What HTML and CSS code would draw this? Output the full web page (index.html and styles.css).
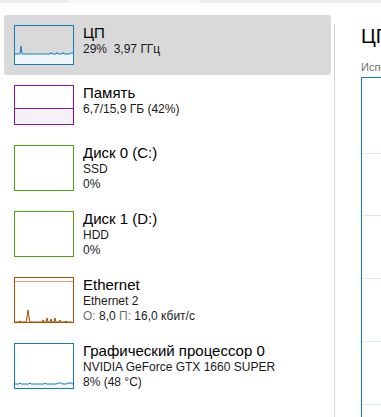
FILE: index.html
```html
<!DOCTYPE html>
<html lang="ru">
<head>
    <meta charset="UTF-8">
    <meta name="viewport" content="width=device-width, initial-scale=1.0">
    <title>Диспетчер задач — Производительность</title>
    <link rel="stylesheet" href="styles.css">
</head>
<body>
    <div class="tabs">
        <span class="tab"></span>
        <span class="tab tab-active"></span>
        <span class="tab"></span>
        <span class="tab"></span>
    </div>

    <div class="main">
        <div class="sidebar">
            <div class="item selected">
                <svg class="thumb" width="60" height="40" viewBox="0 0 60 40">
                    <path d="M1 29 L6 29 L7 21 L8 29 L36 29 L37 27.5 L38 29 L42 29 L43 27.5 L44 29 L48 29 L49 27.5 L50 29 L56 29 L57 28 L59 28 L59 39 L1 39 Z" fill="#f1f6fa"/>
                    <path d="M1 29 L6 29 L7 21 L8 29 L36 29 L37 27.5 L38 29 L42 29 L43 27.5 L44 29 L48 29 L49 27.5 L50 29 L56 29 L57 28 L59 28" fill="none" stroke="#117dbb" stroke-width="1"/>
                    <rect x="0.5" y="0.5" width="59" height="39" fill="none" stroke="#117dbb"/>
                </svg>
                <div class="info">
                    <div class="name">ЦП</div>
                    <div class="sub">29%&nbsp; 3,97 ГГц</div>
                </div>
            </div>

            <div class="item">
                <svg class="thumb" width="60" height="40" viewBox="0 0 60 40">
                    <rect x="1" y="23" width="58" height="16" fill="#f4f2f4"/>
                    <line x1="1" y1="23.5" x2="59" y2="23.5" stroke="#8b12ae"/>
                    <rect x="0.5" y="0.5" width="59" height="39" fill="none" stroke="#8b12ae"/>
                </svg>
                <div class="info">
                    <div class="name">Память</div>
                    <div class="sub">6,7/15,9 ГБ (42%)</div>
                </div>
            </div>

            <div class="item">
                <svg class="thumb thumb-tall" width="60" height="46" viewBox="0 0 60 46">
                    <rect x="0.5" y="0.5" width="59" height="45" fill="none" stroke="#4da60c"/>
                </svg>
                <div class="info">
                    <div class="name">Диск 0 (C:)</div>
                    <div class="sub">SSD</div>
                    <div class="sub">0%</div>
                </div>
            </div>

            <div class="item">
                <svg class="thumb thumb-tall" width="60" height="46" viewBox="0 0 60 46">
                    <rect x="0.5" y="0.5" width="59" height="45" fill="none" stroke="#4da60c"/>
                </svg>
                <div class="info">
                    <div class="name">Диск 1 (D:)</div>
                    <div class="sub">HDD</div>
                    <div class="sub">0%</div>
                </div>
            </div>

            <div class="item">
                <svg class="thumb thumb-tall" width="60" height="46" viewBox="0 0 60 46">
                    <line x1="1" y1="4.5" x2="59" y2="4.5" stroke="#d9a475"/>
                    <path d="M1 45 L5 45 L6 44 L7 45 L12 45 L13 40 L14 33 L15 40 L16 45 L28 45 L29 43 L30 45 L32 45 L33 41 L34 45 L36 45 L37 42 L38 45 L40 45 L41 41 L42 45 L45 45 L46 43 L47 45 L51 45 L52 44 L53 45 L58 45" fill="#f6e3d2" stroke="#a74f01" stroke-width="1"/>
                    <rect x="0.5" y="0.5" width="59" height="45" fill="none" stroke="#a74f01"/>
                </svg>
                <div class="info">
                    <div class="name">Ethernet</div>
                    <div class="sub">Ethernet 2</div>
                    <div class="sub"><span class="dim">О:</span> 8,0 <span class="dim">П:</span> 16,0 кбит/с</div>
                </div>
            </div>

            <div class="item">
                <svg class="thumb thumb-tall" width="60" height="46" viewBox="0 0 60 46">
                    <path d="M1 41 L5 41 L6 40 L7 41 L15 41 L16 40 L17 41 L30 41 L31 40 L32 41 L42 41 L44 40 L47 40 L49 41 L52 41 L54 40 L57 40 L59 41 L59 45 L1 45 Z" fill="#f1f6fa"/>
                    <path d="M1 41 L5 41 L6 40 L7 41 L15 41 L16 40 L17 41 L30 41 L31 40 L32 41 L42 41 L44 40 L47 40 L49 41 L52 41 L54 40 L57 40 L59 41" fill="none" stroke="#117dbb"/>
                    <rect x="0.5" y="0.5" width="59" height="45" fill="none" stroke="#117dbb"/>
                </svg>
                <div class="info">
                    <div class="name">Графический процессор 0</div>
                    <div class="sub">NVIDIA GeForce GTX 1660 SUPER</div>
                    <div class="sub">8% (48 °C)</div>
                </div>
            </div>
        </div>

        <div class="details">
            <div class="title">ЦП</div>
            <div class="caption">Использование</div>
            <div class="chart"></div>
        </div>
    </div>
</body>
</html>
```

FILE: styles.css
```css
html, body {
    margin: 0;
    padding: 0;
    background: white;
    overflow: hidden;
}
body {
    font-family: "Liberation Sans", Arial, sans-serif;
    color: black;
    width: 381px;
    height: 417px;
}
.tabs {
    display: flex;
    height: 3px;
    background: #ececec;
}
.tab {
    width: 67px;
    border-right: 1px solid #e2e2e2;
}
.tab-active {
    width: 132px;
    background: #f8f8f8;
}
.tab:last-child {
    flex: 1;
    border-right: none;
}
.main {
    display: flex;
    height: 414px;
}
.sidebar {
    width: 327px;
    padding: 12px 3px 0 4px;
    flex-shrink: 0;
}
.item {
    display: flex;
    align-items: flex-start;
    gap: 9px;
    padding: 10px 10px;
    border-radius: 3px;
}
.item.selected {
    background: #d9d9d9;
}
.thumb {
    display: block;
    flex-shrink: 0;
    width: 60px;
    height: 40px;
}
.thumb-tall {
    height: 46px;
}
.info {
    margin: -1px 0 -1px;
    white-space: nowrap;
}
.name {
    font-size: 15px;
    line-height: 18px;
}
.sub {
    font-size: 12px;
    line-height: 15px;
    color: #1a1a1a;
}
.dim {
    color: #707070;
}
.details {
    flex: 1;
    margin-top: 21px;
    border-left: 1px solid #d4d4d4;
    padding-left: 26px;
    overflow: hidden;
}
.title {
    font-size: 20px;
    line-height: 24px;
    white-space: nowrap;
}
.caption {
    margin-top: 12px;
    font-size: 11px;
    line-height: 14px;
    color: #707070;
    white-space: nowrap;
}
.chart {
    margin-top: 3px;
    width: 300px;
    height: 400px;
    border: 1px solid #117dbb;
    border-right: none;
    background: repeating-linear-gradient(to bottom, transparent 0, transparent 61.75px, #d9eaf4 61.75px, #d9eaf4 62.75px);
    background-position: 0 13px;
}
```
